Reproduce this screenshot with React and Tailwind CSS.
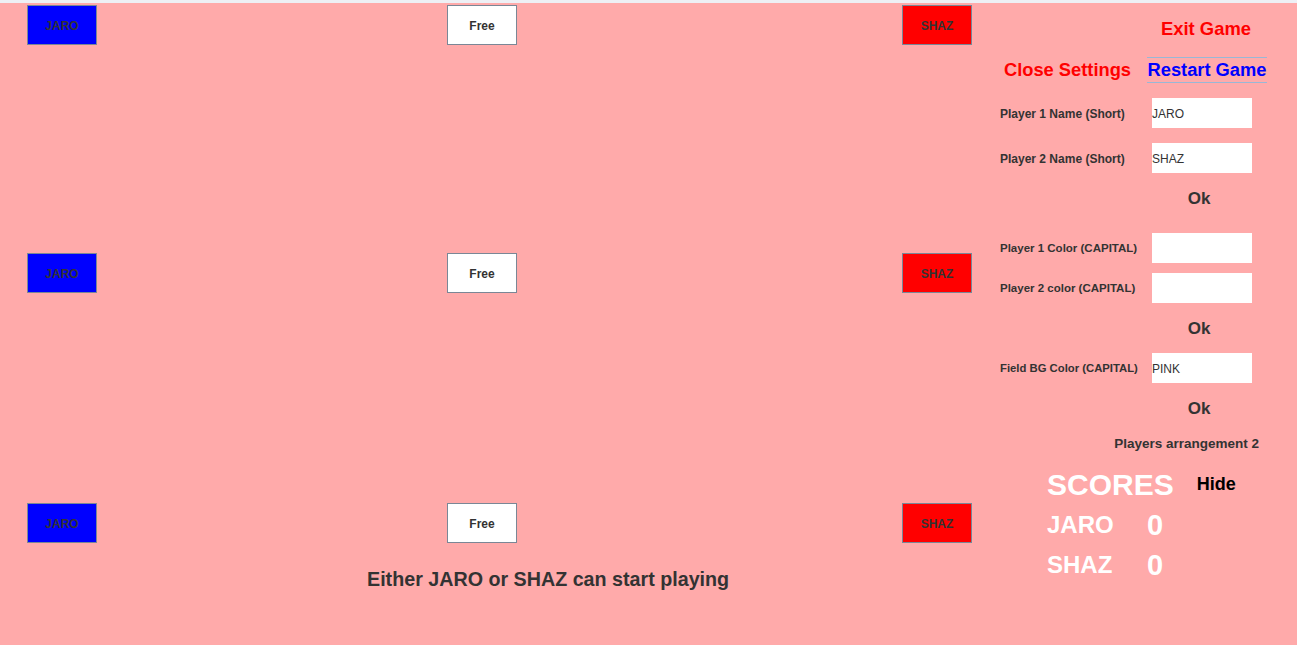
import React from "react";

function Btn({ bg, label }) {
  return (
    <div
      className={`w-[70px] h-[40px] pt-[2px] border border-[#7a8796] flex items-center justify-center text-[12px] font-bold text-[#333] ${bg}`}
    >
      {label}
    </div>
  );
}

function Row({ className }) {
  return (
    <div className={`flex ${className}`}>
      <div className="ml-[27px]"><Btn bg="bg-[#0000ff]" label="JARO" /></div>
      <div className="ml-[350px]"><Btn bg="bg-white" label="Free" /></div>
      <div className="ml-[385px]"><Btn bg="bg-[#ff0000]" label="SHAZ" /></div>
    </div>
  );
}

function Field({ label, value, className, size }) {
  return (
    <div className={`flex items-center h-[30px] ${className}`}>
      <div className={`w-[152px] pt-[1px] font-bold text-[#333] ${size}`}>{label}</div>
      <div className="w-[100px] h-[30px] pt-[2px] bg-white flex items-center text-[12px] text-[#333]">{value}</div>
    </div>
  );
}

function Ok({ className }) {
  return (
    <div className={`w-[249px] flex justify-end ${className}`}>
      <div className="w-[100px] text-center text-[17px] font-bold text-[#333] leading-none">Ok</div>
    </div>
  );
}

export default function App() {
  return (
    <div className="w-[1297px] h-[645px] bg-[#ffaaaa] overflow-hidden" style={{ fontFamily: '"Liberation Sans", Arial, sans-serif' }}>
      <div className="h-[3px] bg-[#eef0f5]" />
      <div className="flex">
        <div className="w-[1000px] flex flex-col">
          <Row className="mt-[2px]" />
          <Row className="mt-[208px]" />
          <Row className="mt-[210px]" />
          <div className="mt-[27px] pl-[367px] text-[19.7px] font-bold text-[#333] leading-none">Either JARO or SHAZ can start playing</div>
        </div>
        <div className="flex flex-col">
          <div className="mt-[17px] w-[266px] flex justify-end">
            <div className="w-[120px] text-center text-[18.4px] font-bold text-[#ff0000] leading-none">Exit Game</div>
          </div>
          <div className="mt-[19px] flex items-center">
            <div className="ml-[4px] text-[18.3px] font-bold text-[#ff0000] leading-none">Close Settings</div>
            <div className="ml-[16px] w-[120px] h-[26px] border-y border-[#9ab7d6] flex items-center justify-center text-[18.3px] font-bold text-[#0000ff] leading-none">Restart Game</div>
          </div>
          <Field className="mt-[15px]" size="text-[12px]" label="Player 1 Name (Short)" value="JARO" />
          <Field className="mt-[15px]" size="text-[12px]" label="Player 2 Name (Short)" value="SHAZ" />
          <Ok className="mt-[17px]" />
          <Field className="mt-[26px]" size="text-[11.5px]" label="Player 1 Color (CAPITAL)" value="" />
          <Field className="mt-[10px]" size="text-[11.5px]" label="Player 2 color (CAPITAL)" value="" />
          <Ok className="mt-[17px]" />
          <Field className="mt-[16px]" size="text-[11.3px]" label="Field BG Color (CAPITAL)" value="PINK" />
          <Ok className="mt-[17px]" />
          <div className="mt-[20px] w-[259px] text-right text-[13.5px] font-bold text-[#333] leading-none">Players arrangement 2</div>
          <div className="mt-[19px] flex items-start">
            <div className="ml-[47px] text-[30px] font-bold text-white leading-none">SCORES</div>
            <div className="ml-[23px] mt-[5px] text-[18px] font-bold text-black leading-none">Hide</div>
          </div>
          <div className="mt-[11px] flex items-center">
            <div className="ml-[47px] w-[100px] text-[24px] font-bold text-white leading-none">JARO</div>
            <div className="text-[29px] font-bold text-white leading-none">0</div>
          </div>
          <div className="mt-[11px] flex items-center">
            <div className="ml-[47px] w-[100px] text-[24px] font-bold text-white leading-none">SHAZ</div>
            <div className="text-[29px] font-bold text-white leading-none">0</div>
          </div>
        </div>
      </div>
    </div>
  );
}
